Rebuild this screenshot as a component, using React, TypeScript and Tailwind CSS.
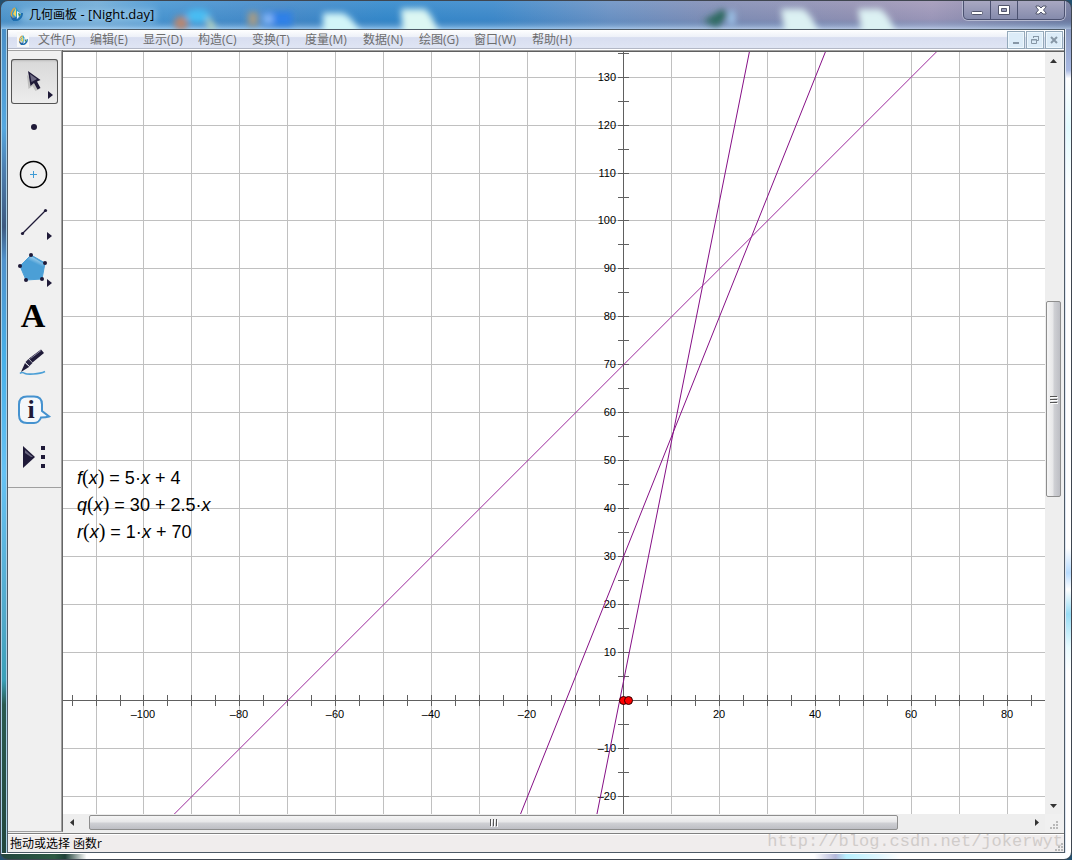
import React, { useState } from "react";

const UNIT = 47.95; // pixels for ten units
const ORIGIN_X = 560;
const ORIGIN_Y = 648;

const menus = [
  { label: "文件(F)", width: "w-[52px]" },
  { label: "编辑(E)", width: "w-[53px]" },
  { label: "显示(D)", width: "w-[55px]" },
  { label: "构造(C)", width: "w-[54px]" },
  { label: "变换(T)", width: "w-[53px]" },
  { label: "度量(M)", width: "w-[58px]" },
  { label: "数据(N)", width: "w-[56px]" },
  { label: "绘图(G)", width: "w-[55px]" },
  { label: "窗口(W)", width: "w-[58px]" },
  { label: "帮助(H)", width: "w-[52px]" },
];

const lines = [
  { name: "f", slope: 5, offset: 4, color: "#860f86" },
  { name: "q", slope: 2.5, offset: 30, color: "#860f86" },
  { name: "r", slope: 1, offset: 70, color: "#9c2a9c" },
];

// Rounds the distance from the origin so that both sides stay symmetric
const step = (k: number) => Math.sign(k) * Math.round(Math.abs(k) * UNIT);
const px = (k: number) => ORIGIN_X + step(k);
const py = (k: number) => ORIGIN_Y - step(k);

const range = (from: number, to: number) =>
  Array.from({ length: to - from + 1 }, (_, i) => from + i);

const Logo: React.FC<{ size: number }> = ({ size }) => (
  <svg width={size} height={size} viewBox="0 0 14 14">
    <path d="M6 1C2 3 1 8 4 12" fill="none" stroke="#d9a441" strokeWidth="1.5" />
    <path d="M4 13C9 14 13 11 13 6" fill="none" stroke="#1d6fb0" strokeWidth="2" />
    <path d="M7 0l4 7-4 4-4-4z" fill="#2f9fc8" />
    <path d="M7 1v9L4 7z" fill="#f3d35c" />
    <path d="M8 4l4 3-4 5z" fill="#e8f4fa" />
    <path d="M9 6l3 1-2 3z" fill="#3f8b4b" />
    <path d="M1 8l3 3 4-1-1 3H3z" fill="#2466a8" />
  </svg>
);

const TitleBar = () => (
  <header className="relative h-[28px] shrink-0 flex justify-between overflow-hidden bg-[linear-gradient(90deg,#4f97cd_0%,#72add8_9%,#4b98d3_15%,#478bca_26%,#368bcd_36%,#3f8bcc_46%,#6f94c5_57%,#8490b7_66%,#9793b4_80%,#a49aba_87%,#777c9f_100%)]">
    <svg className="absolute inset-0 w-full h-full" aria-hidden="true">
      <defs>
        <filter id="glass" x="-50%" y="-50%" width="200%" height="200%">
          <feGaussianBlur stdDeviation="3" />
        </filter>
        <linearGradient id="shine" x1="0" y1="0" x2="0" y2="1">
          <stop offset="0" stopColor="#fff" stopOpacity="0.08" />
          <stop offset="0.65" stopColor="#1c5c98" stopOpacity="0.08" />
          <stop offset="1" stopColor="#c9e6ff" stopOpacity="0.6" />
        </linearGradient>
      </defs>
      <rect width="100%" height="100%" fill="url(#shine)" />
      <g filter="url(#glass)">
        <rect x="20" y="8" width="135" height="14" fill="#a5d1f0" opacity="0.5" />
        <circle cx="180" cy="22" r="7" fill="#b9866f" />
        <ellipse cx="197" cy="15" rx="12" ry="7" fill="#49bdf3" />
        <path d="M206 14l10 14h-9z" fill="#c8dfba" />
        <rect x="247" y="11" width="10" height="14" fill="#a59b86" />
        <rect x="262" y="11" width="29" height="14" fill="#2e80e8" />
        <rect x="262" y="13" width="10" height="10" fill="#82b5f4" />
        <path d="M322 12h20q10 4 18 22h-38z" fill="#d2f5f8" />
        <path d="M400 8h24q8 6 14 26h-36z" fill="#dcf7f3" />
        <path d="M702 20l20-12 6 6-12 12z" fill="#2f6b61" />
        <rect x="727" y="10" width="7" height="14" fill="#9dc3ea" />
        <path d="M780 8h22q10 6 16 26h-34z" fill="#dcf1f3" />
        <path d="M857 8h22q10 6 16 26h-34z" fill="#dcf1f3" />
      </g>
    </svg>
    <div className="relative flex items-center gap-1.5 pl-2 pb-0.5">
      <Logo size={14} />
      <h1 className="font-['Open_Sans','Noto_Sans_CJK_SC',sans-serif] text-[12px] leading-4 text-black">
        几何画板<span className="text-[13px]"> - [Night.day]</span>
      </h1>
    </div>
    <div className="relative mr-1.5 flex h-[19px] rounded-b-[5px] border border-t-0 border-[#4b5170] bg-gradient-to-b from-[#a9a8c2] to-[#858bac] shadow-[0_0_0_1px_#b5b9d0]">
      <button aria-label="最小化" className="w-[27px] flex justify-center border-r border-[#4b5170]">
        <svg width="12" height="19" viewBox="0 0 12 19">
          <rect x="0.5" y="10.5" width="11" height="3" rx="1" fill="#fff" stroke="#52566c" />
        </svg>
      </button>
      <button aria-label="最大化" className="w-[27px] flex justify-center border-r border-[#4b5170]">
        <svg width="12" height="19" viewBox="0 0 12 19">
          <path d="M0.5 4.5h11v9h-11zM3.5 7.5v3h5v-3z" fill="#fff" fillRule="evenodd" stroke="#52566c" />
        </svg>
      </button>
      <button aria-label="关闭" className="w-[46px] flex justify-center">
        <svg width="12" height="19" viewBox="0 0 12 19">
          <path d="M1 5h3l2 2 2-2h3v1L8.500 9l2.500 3v1H8l-2-2-2 2H1v-1l2.500-3L1 6z" fill="#fff" stroke="#52566c" />
        </svg>
      </button>
    </div>
  </header>
);

const childButton =
  "w-[18px] h-[18px] border border-[#94a9ba] bg-[#dcecf8] flex items-center justify-center shadow-[inset_0_0_0_1px_#eef7fd]";

const MenuBar = () => (
  <nav className="h-5 shrink-0 flex items-center border-b border-white bg-[linear-gradient(180deg,#ffffff_0%,#eef1f8_36%,#d8def0_40%,#dfe5f4_92%,#b3b8c6_96%)]">
    <span className="ml-[9px] mr-[9px] flex h-[15px] w-3 items-center justify-center bg-[#f7f8f8]">
      <Logo size={10} />
    </span>
    <div className="flex flex-1">
      {menus.map((menu) => (
        <button
          key={menu.label}
          className={`${menu.width} text-left whitespace-nowrap font-['Open_Sans','Noto_Sans_CJK_SC',sans-serif] text-[12px] leading-4 text-[#6d6d6d]`}
        >
          {menu.label}
        </button>
      ))}
    </div>
    <div className="flex gap-px pr-px">
      <button aria-label="最小化窗口" className={childButton}>
        <svg width="12" height="12">
          <path d="M3 8h6v2H3z" fill="#8797a6" />
        </svg>
      </button>
      <button aria-label="还原窗口" className={childButton}>
        <svg width="12" height="12" fill="none" stroke="#8797a6">
          <path d="M4.500 4V2.500h5v4H8M4 2.500h6M2.500 5.500h5v4h-5zM2 6h6" />
        </svg>
      </button>
      <button aria-label="关闭窗口" className={childButton}>
        <svg width="12" height="12">
          <path d="M3 3l6 6M9 3L3 9" stroke="#8797a6" strokeWidth="2" />
        </svg>
      </button>
    </div>
  </nav>
);

const tools = [
  {
    name: "移动箭头工具",
    icon: (
      <>
        <path d="M16 16l1.500 14 4-3 3 5 4-2-3-5z" fill="#777" opacity="0.35" />
        <path d="M17 12l2.500 15 3.500-3 3.500 6.500 3-1.500-3.500-6.500 3.500-1.500z" fill="#1f1a38" />
        <path d="M19 15l1.500 8 5.500-3z" fill="#6d6a83" />
        <path d="M37 32l5 4-5 4z" fill="#1f1a38" />
      </>
    ),
  },
  { name: "点工具", icon: <circle cx="23" cy="21" r="3" fill="#1f1a38" /> },
  {
    name: "圆工具",
    icon: (
      <>
        <circle cx="22.500" cy="21.500" r="13" fill="none" stroke="#000" strokeWidth="1.500" />
        <path d="M19 21.500h7M22.500 18v7" stroke="#3f9bd4" />
      </>
    ),
  },
  {
    name: "线段直尺工具",
    icon: (
      <>
        <path d="M11.500 33.500l23-23" stroke="#1f1a38" strokeWidth="1.300" />
        <circle cx="11.500" cy="33.500" r="1.600" fill="#1f1a38" />
        <circle cx="34.500" cy="10.500" r="1.600" fill="#1f1a38" />
        <path d="M36 32l5 4-5 4z" fill="#1f1a38" />
      </>
    ),
  },
  {
    name: "多边形工具",
    icon: (
      <>
        <defs>
          <linearGradient id="pentagon" x1="0.800" y1="0.100" x2="0.550" y2="0.500">
            <stop offset="0" stopColor="#c4e3f5" />
            <stop offset="1" stopColor="#4b9fd6" />
          </linearGradient>
        </defs>
        <path d="M20 8l14 8-3 16-16 1-6-14z" fill="#4b9fd6" stroke="#4b9fd6" />
        <path d="M20 9l13 8-2 7q-9-2-18-8z" fill="url(#pentagon)" />
        {[[20, 8], [34, 16], [31, 32], [15, 33], [9, 19]].map(([x, y]) => (
          <circle key={x} cx={x} cy={y} r="2" fill="#1f1a38" />
        ))}
        <path d="M36 32l5 4-5 4z" fill="#1f1a38" />
      </>
    ),
  },
  {
    name: "文本工具",
    icon: (
      <text x="22" y="33" textAnchor="middle" className="font-['Liberation_Serif',serif] text-[34px] font-bold">
        A
      </text>
    ),
  },
  {
    name: "标记工具",
    icon: (
      <>
        <path d="M9 32.500c2-2 3-1 5 0s14 1 20-2" fill="none" stroke="#4b9fd6" strokeWidth="1.600" />
        <path d="M10 31l4-9 4 4z" fill="#1f1a38" />
        <path d="M14.500 21l3-3 4 4-4 4z" fill="#2b2745" />
        <path d="M18 17.500L30 8.500l3 3.500-11.500 9.500z" fill="#1f1a38" />
        <path d="M19.500 17.500L30 9.500" stroke="#8886a0" />
        <path d="M14 21l5 5" stroke="#d6d6dd" />
      </>
    ),
  },
  {
    name: "信息工具",
    icon: (
      <>
        <path
          d="M16 8.500h7q8 0 8 8V23l7 5.500q-3 1-8 1-2 5.500-7 5.500h-7q-8 0-8-8V16.500q0-8 8-8z"
          fill="#f4f7fa"
          stroke="#4592cf"
          strokeWidth="2"
        />
        <text x="20" y="30" textAnchor="middle" fill="#1f1a38" className="font-['Liberation_Serif',serif] text-[26px] font-bold">
          i
        </text>
      </>
    ),
  },
  {
    name: "自定义工具",
    icon: (
      <>
        <path d="M12 11v22l12-11z" fill="#1f1a38" />
        <path d="M14 15v3l6 4h2z" fill="#69667f" />
        <path d="M30 11h4v4h-4zM30 20h4v4h-4zM30 29h4v4h-4z" fill="#1f1a38" />
      </>
    ),
  },
];

const Toolbox = () => {
  const [active, setActive] = useState(0);

  return (
    <aside className="w-[55px] shrink-0 border-r border-[#666666] border-b border-b-[#a0a0a0] bg-[#f0f0f0] shadow-[inset_-1px_1px_0_#a0a0a0]">
      <div className="flex flex-col gap-0.5 pl-[3px] pt-[9px] pb-[7px] mr-px border-b border-[#a0a0a0]">
        {tools.map((tool, i) => (
          <button
            key={tool.name}
            aria-label={tool.name}
            onClick={() => setActive(i)}
            className={
              i === active
                ? "w-[47px] h-[45px] rounded-[3px] bg-gradient-to-b from-[#d8d8d8] to-[#ededed] shadow-[inset_0_0_0_1px_#555555,inset_0_2px_2px_#bbbbbb]"
                : "w-[47px] h-[45px]"
            }
          >
            <svg width="47" height="45">{tool.icon}</svg>
          </button>
        ))}
      </div>
    </aside>
  );
};

const Graph = () => (
  <svg className="absolute inset-0 w-full h-full" role="img" aria-label="函数图像">
    <g stroke="#c0c0c0" shapeRendering="crispEdges">
      {range(-11, 20).map((k) => (
        <line key={`v${k}`} x1={px(k) + 0.5} x2={px(k) + 0.5} y1="0" y2="100%" />
      ))}
      {range(-12, 13).map((k) => (
        <line key={`h${k}`} x1="0" x2="100%" y1={py(k) + 0.5} y2={py(k) + 0.5} />
      ))}
    </g>
    <g stroke="#606060" shapeRendering="crispEdges">
      <line x1="0" x2="100%" y1={ORIGIN_Y + 0.5} y2={ORIGIN_Y + 0.5} />
      <line x1={ORIGIN_X + 0.5} x2={ORIGIN_X + 0.5} y1="0" y2="100%" />
      {range(-23, 40).map((k) => (
        <line key={`tx${k}`} x1={px(k / 2) + 0.5} x2={px(k / 2) + 0.5} y1={ORIGIN_Y - 5} y2={ORIGIN_Y + 6} />
      ))}
      {range(-24, 27).map((k) => (
        <line key={`ty${k}`} x1={ORIGIN_X - 5} x2={ORIGIN_X + 6} y1={py(k / 2) + 0.5} y2={py(k / 2) + 0.5} />
      ))}
    </g>
    <g className="font-['Liberation_Sans',Arial,sans-serif] text-[11px]" fill="#000">
      {range(-5, 4)
        .filter((k) => k !== 0)
        .map((k) => (
          <text key={k} x={px(k * 2)} y={ORIGIN_Y + 18} textAnchor="middle">
            {k < 0 ? `–${-k * 20}` : k * 20}
          </text>
        ))}
      {range(-2, 13)
        .filter((k) => k !== 0)
        .map((k) => (
          <text key={k} x={ORIGIN_X - 7} y={py(k) + 4} textAnchor="end">
            {k < 0 ? `–${-k * 10}` : k * 10}
          </text>
        ))}
    </g>
    <g>
      {lines.map(({ name, slope, offset, color }) => (
        <line
          key={name}
          stroke={color}
          x1={ORIGIN_X + 0.5 - 15 * UNIT}
          y1={ORIGIN_Y + 0.5 - ((slope * -150 + offset) / 10) * UNIT}
          x2={ORIGIN_X + 0.5 + 15 * UNIT}
          y2={ORIGIN_Y + 0.5 - ((slope * 150 + offset) / 10) * UNIT}
        />
      ))}
    </g>
    <g fill="#ff0000" stroke="#300000">
      <circle cx={ORIGIN_X + 0.5} cy={ORIGIN_Y + 0.5} r="4" />
      <circle cx={ORIGIN_X + 5.5} cy={ORIGIN_Y + 0.5} r="4" />
    </g>
  </svg>
);

const Paren: React.FC<{ children: React.ReactNode }> = ({ children }) => (
  <>
    <span className="font-['Liberation_Serif',serif] text-[20px] leading-none">(</span>
    <i>{children}</i>
    <span className="font-['Liberation_Serif',serif] text-[20px] leading-none">)</span>
  </>
);

const Sketch = () => (
  <main className="relative flex-1 overflow-hidden bg-white">
    <Graph />
    <div className="absolute left-3.5 top-[413px] whitespace-nowrap font-['Liberation_Sans',Arial,sans-serif] text-[18px] leading-[27px] text-black">
      <p>
        <i>f</i>
        <Paren>x</Paren> = 5·<i>x</i> + 4
      </p>
      <p>
        <i>q</i>
        <Paren>x</Paren> = 30 + 2.5·<i>x</i>
      </p>
      <p>
        <i>r</i>
        <Paren>x</Paren> = 1·<i>x</i> + 70
      </p>
    </div>
  </main>
);

const VerticalScroll = () => (
  <div className="w-[17px] shrink-0 flex flex-col bg-[#eeeeee] pl-px pr-px">
    <button aria-label="向上滚动" className="h-[17px] flex justify-center items-center">
      <svg width="7" height="4">
        <path d="M0 4l3.500-4L7 4z" fill="#333" />
      </svg>
    </button>
    <div className="grow-[232] basis-0" />
    <div className="grow-[194] basis-0 rounded-[2px] border border-[#8e8e8e] bg-[linear-gradient(90deg,#f5f5f5,#e6e6e8_48%,#d0d1d5_52%,#bdbec4)] flex items-center justify-center">
      <svg width="8" height="9">
        <path d="M0 1.500h7M0 4.500h7M0 7.500h7" stroke="#555" />
        <path d="M1 2.500h7M1 5.500h7M1 8.500h7" stroke="#fff" />
      </svg>
    </div>
    <div className="grow-[300] basis-0" />
    <button aria-label="向下滚动" className="h-[17px] flex justify-center items-center">
      <svg width="7" height="4">
        <path d="M0 0l3.500 4L7 0z" fill="#333" />
      </svg>
    </button>
  </div>
);

const HorizontalScroll = () => (
  <div className="flex-1 flex bg-[#eeeeee] pt-px pb-0.5">
    <button aria-label="向左滚动" className="w-[17px] flex justify-center items-center">
      <svg width="4" height="7">
        <path d="M4 0L0 3.500 4 7z" fill="#333" />
      </svg>
    </button>
    <div className="grow-[9] basis-0" />
    <div className="grow-[809] basis-0 rounded-[2px] border border-[#8e8e8e] bg-[linear-gradient(180deg,#f5f5f5,#e6e6e8_48%,#d0d1d5_52%,#bdbec4)] flex items-center justify-center">
      <svg width="9" height="8">
        <path d="M1.500 0v7M4.500 0v7M7.500 0v7" stroke="#555" />
        <path d="M2.500 1v7M5.500 1v7M8.500 1v7" stroke="#fff" />
      </svg>
    </div>
    <div className="grow-[130] basis-0" />
    <button aria-label="向右滚动" className="w-[17px] flex justify-center items-center">
      <svg width="4" height="7">
        <path d="M0 0l4 3.500L0 7z" fill="#333" />
      </svg>
    </button>
  </div>
);

const SizeGrip = () => (
  <svg width="9" height="9" fill="#b8b8b8" aria-hidden="true">
    <path d="M6 0h2v2H6zM3 3h2v2H3zM6 3h2v2H6zM0 6h2v2H0zM3 6h2v2H3zM6 6h2v2H6z" />
  </svg>
);

const StatusBar = () => (
  <footer className="h-[19px] shrink-0 flex items-center justify-between border-t border-[#808080] bg-[#f0eded] shadow-[inset_0_1px_0_#ffffff]">
    <p className="pl-0.5 pt-0.5 font-['Open_Sans','Noto_Sans_CJK_SC',sans-serif] text-[12px] leading-4 text-black">
      拖动或选择 函数r
    </p>
    <div className="flex h-full items-end">
      <span className="-mr-2 self-start font-['Liberation_Mono',monospace] text-[17px] leading-4 text-[#d0ccca]">
        http://blog.csdn.net/jokerwyt
      </span>
      <SizeGrip />
    </div>
  </footer>
);

export default function App() {
  return (
    <div className="bg-[#23506f]">
      <div className="h-screen flex flex-col overflow-hidden rounded-lg border border-[#3f4650]">
        <TitleBar />
        <div className="flex-1 min-h-0 flex">
          <div className="w-1.5 shrink-0 border-x border-x-[#a9cfe6] bg-[linear-gradient(180deg,#4a90c8,#55a8e0_12%,#4d7fb0_17%,#3d5a80_24%,#5092cc_28%,#48b0e8_40%,#66c2f4_54%,#50a8c8_72%,#3aa0b8_79%,#2a5a50_82%,#23463d)]" />
          <div className="flex-1 min-w-0 flex flex-col border border-[#4d5a66]">
            <MenuBar />
            <div className="flex-1 min-h-0 flex bg-[#f0f0f0] pb-px">
              <Toolbox />
              <div className="flex-1 min-w-0 flex flex-col border-t border-[#a0a0a0]">
                <div className="flex-1 min-h-0 flex border-t border-[#606060]">
                  <Sketch />
                  <VerticalScroll />
                  <div className="w-0.5 shrink-0 bg-[#f0f0f0]" />
                </div>
                <div className="h-[18px] shrink-0 flex">
                  <HorizontalScroll />
                  <div className="w-[19px] shrink-0 flex items-end justify-center pb-0.5">
                    <SizeGrip />
                  </div>
                </div>
              </div>
            </div>
            <StatusBar />
          </div>
          <div className="w-1.5 shrink-0 border-l border-l-[#dfe6f2] bg-[linear-gradient(180deg,#8c9cc2,#a8b9e2_5%,#ffffff_6%,#e2fbff_12%,#ffffff_20%,#ffffff_63%,#b8dcff_66%,#ffffff_68%,#98dcf5_71%,#e8fbff_75%,#ffffff_78%)]" />
        </div>
        <div className="h-1.5 shrink-0 border-t border-white bg-[linear-gradient(90deg,#23463d_0%,#2f5a44_5%,#1f4038_6%,#ffffff_8%,#ffffff_76%,#b4b8da_78%,#b8f0ff_79%,#dff6ff_82%,#ffffff_84%)]" />
      </div>
    </div>
  );
}
